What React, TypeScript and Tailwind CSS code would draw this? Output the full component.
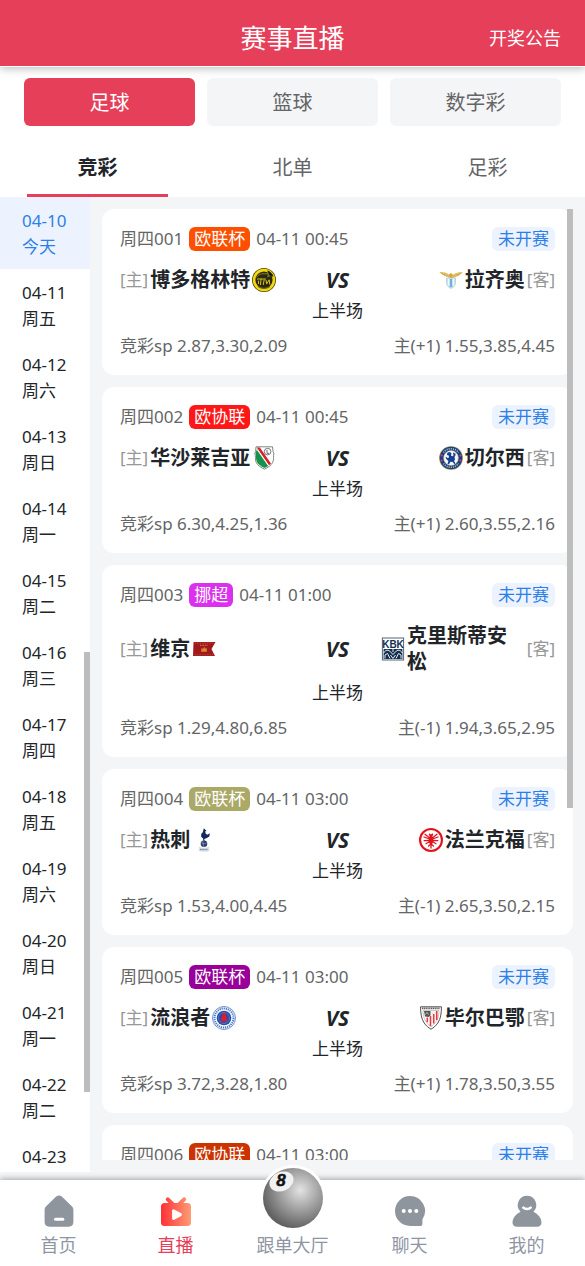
import React, { useState } from "react";

type Crest = () => React.JSX.Element;

const crestClass = "h-6 w-6 shrink-0";

const BodoGlimt: Crest = () => (
  <svg viewBox="0 0 24 24" className={crestClass} aria-hidden="true">
    <circle cx="12" cy="12" r="12" fill="#4d4512" />
    <circle cx="12" cy="12" r="11.2" fill="#f2d80c" />
    <circle cx="12" cy="12" r="8.6" fill="#2a2712" />
    <path d="M4.6 9.500c2-3.200 5-4.200 9-3.600l3.600-.8-1.600 2 2.600.6-3 1.100" fill="none" stroke="#8f8420" strokeWidth="1" />
    <path d="M5 11h9M9.200 10.500l-.8 6.500M12.200 11.500l-1 5.500M14 12l.6 4 2.600-4.200.6 4.800M6.400 12.600l.2 3.400" fill="none" stroke="#d9c21a" strokeWidth="1" />
    <path d="M15 2.200c3.400 1 5.600 3.200 6.600 6.600l-4-1.400z" fill="#1e1c10" />
    <path d="M6 18.500c3.500 2.200 8.500 2.200 12 0" fill="none" stroke="#6b6219" strokeWidth="1.200" />
  </svg>
);

const Lazio: Crest = () => (
  <svg viewBox="0 0 24 24" className={crestClass} aria-hidden="true">
    <path d="M.4 4.400c3.800-.5 7 .2 9.600 2.400l1.200-1.600 1.800.2.900 1.600c2.700-2.200 5.800-2.900 9.700-2.600-2 1.300-3.300 2.800-5 3.600-1.700.7-2.700.9-4.600 2.400h-3.400C8.900 8.900 7.600 8.700 6 8 4.100 7.200 2.700 5.600.4 4.400z" fill="#d5a63c" />
    <path d="M3.500 5.200c3 .3 5 1.400 7 3.300M20.500 5.200c-3 .3-5 1.400-7 3.300M6 6.700l3.800 2.600M18 6.700l-3.800 2.600" fill="none" stroke="#f3d98c" strokeWidth=".6" />
    <path d="M7.500 10h9v4.500c0 3.100-1.700 4.600-4.500 5.900-2.800-1.300-4.500-2.800-4.500-5.900z" fill="#b9dcf2" stroke="#c6d0d8" strokeWidth="1" />
    <path d="M9.500 10.500v7M14.500 10.500v7" stroke="#f4fafd" strokeWidth="1.500" />
    <path d="M12 11v8" stroke="#69addb" strokeWidth="1.800" />
  </svg>
);

const Legia: Crest = () => (
  <svg viewBox="0 0 24 24" className={crestClass} aria-hidden="true">
    <path d="M4 .8h16.500l.6 5 .8 1.500c-1 3 .6 5.500-1.200 9-1.400 3.200-4.700 5-8.200 6.900-3.300-1.700-6.900-3.500-8.300-6.900-1.500-3.400-.2-5.700-1.400-9l.8-1.700z" fill="#fff" stroke="#6e7a72" strokeWidth=".9" />
    <path d="M3.600 7c.8 3-.2 5.600 1.300 8.800 1.200 2.800 4.300 4.700 7.600 6.300 1.400-.8 2.600-1.500 3.700-2.200L5 3z" fill="#16924b" />
    <path d="M4.800 1.400h3L19 17.600l-2 1.700z" fill="#d91f2b" />
    <path d="M5 3.500l11.400 16" stroke="#fff" strokeWidth=".9" />
    <circle cx="15.600" cy="5.600" r="3.300" fill="#fff" stroke="#555" strokeWidth=".8" />
    <path d="M15 3.800v3.500h2" fill="none" stroke="#444" strokeWidth=".8" />
  </svg>
);

const Chelsea: Crest = () => (
  <svg viewBox="0 0 24 24" className={crestClass} aria-hidden="true">
    <circle cx="12" cy="12" r="12" fill="#c9ad61" />
    <circle cx="12" cy="12" r="11.300" fill="#143f8e" />
    <path d="M4.500 6.500a9.300 9.300 0 0 1 15 0M4.500 17.500a9.300 9.300 0 0 0 15 0" fill="none" stroke="#b9c3b0" strokeWidth="1.500" strokeDasharray="1.100 1" />
    <circle cx="12" cy="12" r="7.400" fill="#f4f6fa" stroke="#d9bd68" strokeWidth=".5" />
    <path d="M8.500 6.500l2.500-.5 1.500 1.500-.5 2.300 2 .4.500-1.200-.5-2 1-.6.600 1.200 1-.2-.2 2.200-.9 1.400.5 2.500-1 1.500 1.500 2.500-1 .8-1.800-2.300-2.200-.3-1.500 2.500-1.500-.3.900-3-1.900-1.600-1-2 .9-.4 1.400 1.300 1.200-1-.3-1.800-1.800-.5z" fill="#153f91" />
    <circle cx="2.600" cy="9.500" r="1.100" fill="#ec3f4b" />
    <circle cx="21.400" cy="9.500" r="1.100" fill="#ec3f4b" />
    <circle cx="2.700" cy="14.500" r="1" fill="#ec3f4b" />
    <circle cx="21.300" cy="14.500" r="1" fill="#ec3f4b" />
  </svg>
);

const Viking: Crest = () => (
  <svg viewBox="0 0 24 24" className={crestClass} aria-hidden="true">
    <path d="M1.500 5h22l-4 7 3.500 7H1z" fill="#a01a1d" />
    <path d="M2.500 6.200h18.500M2.500 17.800h18.500" stroke="#c35a3c" strokeWidth=".7" strokeDasharray="1.500 1" />
    <path d="M9 14.800l.7-4 1.300 1.200 1.200-2.200 1 2 1.300-1 .5 4z" fill="#d98836" />
    <path d="M8 8.300h8" stroke="#d9a25a" strokeWidth=".8" strokeDasharray="1 .6" />
  </svg>
);

const Kristiansund: Crest = () => (
  <svg viewBox="0 0 24 24" className={crestClass} aria-hidden="true">
    <rect x="1.400" y="1" width="21.200" height="22" fill="#fff" stroke="#52657c" strokeWidth="1" />
    <text x="12" y="10.500" textAnchor="middle" fontFamily="Liberation Sans Narrow, Liberation Sans, sans-serif" fontWeight="700" fontSize="10" fill="#14304f">KBK</text>
    <path d="M2.600 12h18.800v10H2.600z" fill="#14304f" />
    <path d="M2.600 16c2-3.500 5-3.500 7-1l2.400 2.500 2.400-2.500c2-2.500 5-2.500 7 1M4 21.500v-3.500l2.500-1.500 2.500 5M20 21.500v-3.500l-2.500-1.500-2.500 5M9.500 18l2.500 3.500 2.500-3.500M12 12v3" fill="none" stroke="#fff" strokeWidth=".9" />
  </svg>
);

const Tottenham: Crest = () => (
  <svg viewBox="0 0 24 24" className={crestClass} aria-hidden="true">
    <path d="M11.800.2l1.500 1.500 1.300.8-1.300.7.300 2.200 1.600 1.300 2.600-1.500-.5 3.300-2.900 1.700-2.100.8.2 2h-1.200l-.2-2.400-2-1.800.2-3 1.500-1.500z" fill="#14295b" />
    <circle cx="12" cy="15.700" r="3.300" fill="#2b3e6d" />
    <path d="M9 14.500c2 1.500 4 1.500 6 .3M11 12.500c-.3 2 0 4 .8 6.300" fill="none" stroke="#aab5ca" strokeWidth=".5" />
    <path d="M6.500 18.800l3 1h5l3-1-1 1.800 1 2-2.500.8H9l-2.500-.8 1-2z" fill="#cdd6e2" />
    <path d="M8 21.500h8" stroke="#73839f" strokeWidth="1.200" strokeDasharray="1 .6" />
  </svg>
);

const Frankfurt: Crest = () => (
  <svg viewBox="0 0 24 24" className={crestClass} aria-hidden="true">
    <circle cx="12" cy="12" r="12" fill="#e3121b" />
    <circle cx="12" cy="12" r="9.900" fill="#fff" />
    <path d="M12 8.500l1 1.800 5-4M11 10.300l-5-4M13.500 11l5.500-2M10.500 11L5 9M13.500 12.500l5.300.2M10.500 12.500l-5.300.2M13.300 13.500l3.700 2.200M10.700 13.500L7 15.700M12 12v8M12 16l2.500 2M12 16l-2.500 2" fill="none" stroke="#e3121b" strokeWidth="1.300" strokeLinecap="round" />
    <path d="M10.300 5.200l1.700 1.200 1.700-1.200.6 1.800-1 1 .9 2.500-.2 4-2 3-2-3-.2-4 .9-2.500-1-1z" fill="#e3121b" />
  </svg>
);

const Rangers: Crest = () => (
  <svg viewBox="0 0 24 24" className={crestClass} aria-hidden="true">
    <circle cx="12" cy="12" r="11.500" fill="#fff" stroke="#5e86cc" strokeWidth=".9" />
    <circle cx="12" cy="12" r="9.500" fill="none" stroke="#4c79ca" strokeWidth="2" strokeDasharray="1.300 .8" />
    <circle cx="12" cy="12" r="7.300" fill="#1f50ae" />
    <circle cx="12" cy="12" r="5.500" fill="none" stroke="#6b91d5" strokeWidth=".6" />
    <path d="M10 7.500l2.500-.9 1.800 1-1 1.900 1.700.8-.8 1.800 1.200 1.600-1.500 3-1.300-2-1.700.4-.3 2.100-1.500-.2.400-3-1.200-1.800 1.500-.7.900-1.700z" fill="#e11c2d" />
  </svg>
);

const Athletic: Crest = () => (
  <svg viewBox="0 0 24 24" className={crestClass} aria-hidden="true">
    <path d="M1.500.8h21c-.2 7-.8 12-3.700 16.200-1.900 2.800-4.200 4.700-6.800 6.200-2.600-1.500-4.900-3.400-6.800-6.200C2.300 12.800 1.700 7.800 1.500.8z" fill="#fff" stroke="#56504f" strokeWidth="1" />
    <path d="M3 2.400h18" stroke="#605c5b" strokeWidth="1.700" strokeDasharray="1.300 .5" />
    <path d="M4 4.500c.2 4.700 1 8.800 3.500 12 1.200 1.700 2.700 3.100 4.500 4.300 1.800-1.200 3.300-2.600 4.500-4.300 2.500-3.200 3.300-7.300 3.500-12z" fill="none" stroke="#a8a3a3" strokeWidth=".6" />
    <path d="M5 5h6.500v4.500l-2 1.600-3.500-.6z" fill="#555" />
    <path d="M6.500 8.500l1.500-2 1.500 2M13 4.500v5M13 7h4" fill="none" stroke="#ddd" strokeWidth=".8" />
    <path d="M8.300 11.500v4.800M11.500 10v10M14.700 8v9.500M17.700 5v9" stroke="#e43a42" strokeWidth="1.600" />
  </svg>
);

interface Fixture {
  home: string;
  HomeCrest: Crest;
  away: string;
  AwayCrest: Crest;
  sp: string;
  handicap: string;
}

interface Match {
  no: string;
  league: string;
  tone: string;
  time: string;
  fixture?: Fixture;
}

const matches: Match[] = [
  { no: "001", league: "欧联杯", tone: "bg-[#fc5000]", time: "04-11 00:45", fixture: { home: "博多格林特", HomeCrest: BodoGlimt, away: "拉齐奥", AwayCrest: Lazio, sp: "2.87,3.30,2.09", handicap: "主(+1) 1.55,3.85,4.45" } },
  { no: "002", league: "欧协联", tone: "bg-[#ff1717]", time: "04-11 00:45", fixture: { home: "华沙莱吉亚", HomeCrest: Legia, away: "切尔西", AwayCrest: Chelsea, sp: "6.30,4.25,1.36", handicap: "主(+1) 2.60,3.55,2.16" } },
  { no: "003", league: "挪超", tone: "bg-[#db31ee]", time: "04-11 01:00", fixture: { home: "维京", HomeCrest: Viking, away: "克里斯蒂安松", AwayCrest: Kristiansund, sp: "1.29,4.80,6.85", handicap: "主(-1) 1.94,3.65,2.95" } },
  { no: "004", league: "欧联杯", tone: "bg-[#aba968]", time: "04-11 03:00", fixture: { home: "热刺", HomeCrest: Tottenham, away: "法兰克福", AwayCrest: Frankfurt, sp: "1.53,4.00,4.45", handicap: "主(-1) 2.65,3.50,2.15" } },
  { no: "005", league: "欧联杯", tone: "bg-[#990099]", time: "04-11 03:00", fixture: { home: "流浪者", HomeCrest: Rangers, away: "毕尔巴鄂", AwayCrest: Athletic, sp: "3.72,3.28,1.80", handicap: "主(+1) 1.78,3.50,3.55" } },
  { no: "006", league: "欧协联", tone: "bg-[#cc3300]", time: "04-11 03:00" },
];

const days: [string, string][] = [
  ["04-10", "今天"],
  ["04-11", "周五"],
  ["04-12", "周六"],
  ["04-13", "周日"],
  ["04-14", "周一"],
  ["04-15", "周二"],
  ["04-16", "周三"],
  ["04-17", "周四"],
  ["04-18", "周五"],
  ["04-19", "周六"],
  ["04-20", "周日"],
  ["04-21", "周一"],
  ["04-22", "周二"],
  ["04-23", "周三"],
];

function FixtureDetails({ fixture }: { fixture: Fixture }) {
  const { home, HomeCrest, away, AwayCrest, sp, handicap } = fixture;
  return (
    <>
      <div className="mt-4 flex items-center">
        <div className="flex w-2/5 items-center gap-[2px]">
          <span className="shrink-0 text-[#969799]">[主]</span>
          <strong className="text-[20px] leading-[26px] text-[#212529]">{home}</strong>
          <HomeCrest />
        </div>
        <strong className="w-1/5 text-center text-[21px] leading-[26px] text-[#212529] italic">VS</strong>
        <div className="flex w-2/5 items-center justify-end gap-[2px]">
          <AwayCrest />
          <strong className="text-[20px] leading-[26px] text-[#212529]">{away}</strong>
          <span className="shrink-0 text-[#969799]">[客]</span>
        </div>
      </div>
      <p className="mt-[6px] text-center text-[#212529]">上半场</p>
      <div className="mt-[11px] flex justify-between">
        <span>竞彩sp {sp}</span>
        <span>{handicap}</span>
      </div>
    </>
  );
}

function MatchCard({ match }: { match: Match }) {
  return (
    <li className="rounded-xl bg-white px-[18px] pt-[18px] pb-[17px] text-[17px] leading-6 text-[#646566]">
      <div className="flex items-center gap-[6px]">
        <span>周四{match.no}</span>
        <span className={`rounded-md px-[5px] text-white ${match.tone}`}>{match.league}</span>
        <span>{match.time}</span>
        <span className="ml-auto rounded-md bg-[#ecf3ff] px-[6px] text-[#2d7fe8]">未开赛</span>
      </div>
      {match.fixture && <FixtureDetails fixture={match.fixture} />}
    </li>
  );
}

const HomeIcon = () => (
  <svg viewBox="0 0 32 32" className="h-8 w-8" aria-hidden="true">
    <path d="M13.200 1.600c1.700-1.400 3.900-1.400 5.600 0l9.800 9.400c1.200 1.100 1.800 2.500 1.800 4.100V27c0 2.800-1.900 4.700-4.700 4.700H6.300c-2.800 0-4.700-1.900-4.700-4.700V15.100c0-1.600.6-3 1.800-4.100z" fill="#8f959d" />
    <path d="M12.500 24.200h7.300" stroke="#fff" strokeWidth="3" strokeLinecap="round" />
  </svg>
);

const LiveIcon = () => (
  <svg viewBox="0 0 32 32" className="h-8 w-8" aria-hidden="true">
    <defs>
      <linearGradient id="live-tone" gradientUnits="userSpaceOnUse" x1="1" y1="0" x2="31" y2="0">
        <stop offset="0" stopColor="#ff3036" />
        <stop offset="1" stopColor="#ff9d76" />
      </linearGradient>
    </defs>
    <path d="M7.800 4.300l5.700 5.700M24.200 4.300L18.500 10" fill="none" stroke="url(#live-tone)" strokeWidth="4" strokeLinecap="round" />
    <rect x="1" y="8" width="30" height="23" rx="3.500" fill="url(#live-tone)" />
    <path d="M13.600 15.800v7.600l6.800-3.800z" fill="#fff" stroke="#fff" strokeWidth="3" strokeLinejoin="round" />
  </svg>
);

const BallIcon = () => (
  <svg viewBox="0 0 66 66" className="-mb-1 h-[66px] w-[66px] shrink-0" aria-hidden="true">
    <defs>
      <radialGradient id="ball-tone" cx=".62" cy=".37" r=".64">
        <stop offset="0" stopColor="#e3e3e3" />
        <stop offset=".35" stopColor="#b5b5b5" />
        <stop offset=".7" stopColor="#888" />
        <stop offset="1" stopColor="#626262" />
      </radialGradient>
    </defs>
    <circle cx="33" cy="33" r="33" fill="#fff" />
    <circle cx="33" cy="33" r="30" fill="url(#ball-tone)" />
    <ellipse cx="21.500" cy="16.500" rx="12.500" ry="9.500" transform="rotate(-24 21.500 16.500)" fill="#f1f1f1" />
    <text x="21" y="21" textAnchor="middle" fontFamily="Liberation Sans, sans-serif" fontWeight="700" fontStyle="italic" fontSize="17" fill="#111" stroke="#111" strokeWidth=".5">8</text>
  </svg>
);

const ChatIcon = () => (
  <svg viewBox="0 0 32 32" className="h-8 w-8" aria-hidden="true">
    <path d="M16 1a15 15 0 1 0 0 30h10.500c1.300 0 1.900-.6 1.900-1.900v-4.700A15 15 0 0 0 16 1z" fill="#8f959d" />
    <circle cx="9.700" cy="16" r="2" fill="#fff" />
    <circle cx="16" cy="16" r="2" fill="#fff" />
    <circle cx="22.300" cy="16" r="2" fill="#fff" />
  </svg>
);

const UserIcon = () => (
  <svg viewBox="0 0 32 32" className="h-8 w-8" aria-hidden="true">
    <path d="M16 .8a9.300 9.300 0 0 0-6.500 15.900C5 18.800 1.500 23 1.500 27.500c0 2.700 1.600 4.200 4.300 4.200h20.400c2.700 0 4.300-1.500 4.300-4.200 0-4.500-3.500-8.700-8-10.800A9.300 9.300 0 0 0 16 .8z" fill="#8f959d" />
    <path d="M12.300 12.600c1.800 1.900 5.600 1.900 7.400 0" fill="none" stroke="#fff" strokeWidth="2.500" strokeLinecap="round" />
  </svg>
);

const navItems = [
  { label: "首页", Icon: HomeIcon },
  { label: "直播", Icon: LiveIcon },
  { label: "跟单大厅", Icon: BallIcon },
  { label: "聊天", Icon: ChatIcon },
  { label: "我的", Icon: UserIcon },
];

export default function App() {
  const [sport, setSport] = useState("足球");
  const [lottery, setLottery] = useState("竞彩");
  const [day, setDay] = useState("04-10");

  return (
    <div className="flex h-screen flex-col bg-[#f4f5f7] font-['Noto_Sans','Noto_Sans_CJK_SC',sans-serif] text-[#212529]">
      <header className="relative z-10 grid grid-cols-3 items-center border-b border-white bg-[#e53f59] px-6 pt-3 pb-[2px] text-white shadow-[0_2px_8px_rgba(0,0,0,0.25)]">
        <h1 className="col-start-2 text-center text-[26px] leading-[52px]">赛事直播</h1>
        <a href="#results" className="justify-self-end text-[18px]">开奖公告</a>
      </header>

      <div className="bg-white">
        <div className="flex gap-3 px-6 pt-[11px]">
          {["足球", "篮球", "数字彩"].map((name) => (
            <button
              key={name}
              type="button"
              onClick={() => setSport(name)}
              className={`h-12 flex-1 rounded-md pt-[2px] text-[20px] ${sport === name ? "bg-[#e53f59] text-white" : "bg-[#f4f5f7] text-[#646566]"}`}
            >
              {name}
            </button>
          ))}
        </div>
        <div role="tablist" className="mt-[11px] flex">
          {["竞彩", "北单", "足彩"].map((name) => (
            <button
              key={name}
              type="button"
              role="tab"
              aria-selected={lottery === name}
              onClick={() => setLottery(name)}
              className="flex-1 px-[27px] text-[20px]"
            >
              <span
                className={`block border-b-3 pt-[5px] leading-[52px] ${lottery === name ? "border-[#e53f59] font-bold text-[#212529]" : "border-transparent text-[#646566]"}`}
              >
                {name}
              </span>
            </button>
          ))}
        </div>
      </div>

      <main className="flex min-h-0 flex-1">
        <div className="relative mb-2 w-[90px] shrink-0 bg-white">
          <div className="h-full overflow-y-auto [scrollbar-width:none]">
            {days.map(([date, label]) => (
              <button
                key={date}
                type="button"
                onClick={() => setDay(date)}
                className={`block h-[72px] w-full pt-px pl-[22px] text-left text-[17px] leading-[26px] ${day === date ? "bg-[#ecf3ff] text-[#2d7fe8]" : ""}`}
              >
                {date}
                <br />
                {label}
              </button>
            ))}
          </div>
          <div className="absolute top-[455px] right-0 h-[440px] w-[6px] bg-[#bdbdbd]" />
        </div>
        <div className="relative mx-3 mt-3 mb-5 min-w-0 flex-1">
          <ul className="flex h-full flex-col gap-3 overflow-y-auto [scrollbar-width:none] *:shrink-0">
            {matches.map((match) => (
              <MatchCard key={match.no} match={match} />
            ))}
          </ul>
          <div className="absolute top-0 right-0 h-[599px] w-[6px] bg-[#bdbdbd]" />
        </div>
      </main>

      <nav className="relative z-10 flex h-[86px] bg-white shadow-[0_-1px_6px_rgba(0,0,0,0.35)]">
        {navItems.map(({ label, Icon }) => (
          <a
            key={label}
            href={`#${label}`}
            className={`flex flex-1 flex-col items-center justify-end gap-[5px] pb-2 text-[18px] leading-[26px] ${label === "直播" ? "text-[#e53f59]" : "text-[#8f95a3]"}`}
          >
            <Icon />
            <span>{label}</span>
          </a>
        ))}
      </nav>
    </div>
  );
}
